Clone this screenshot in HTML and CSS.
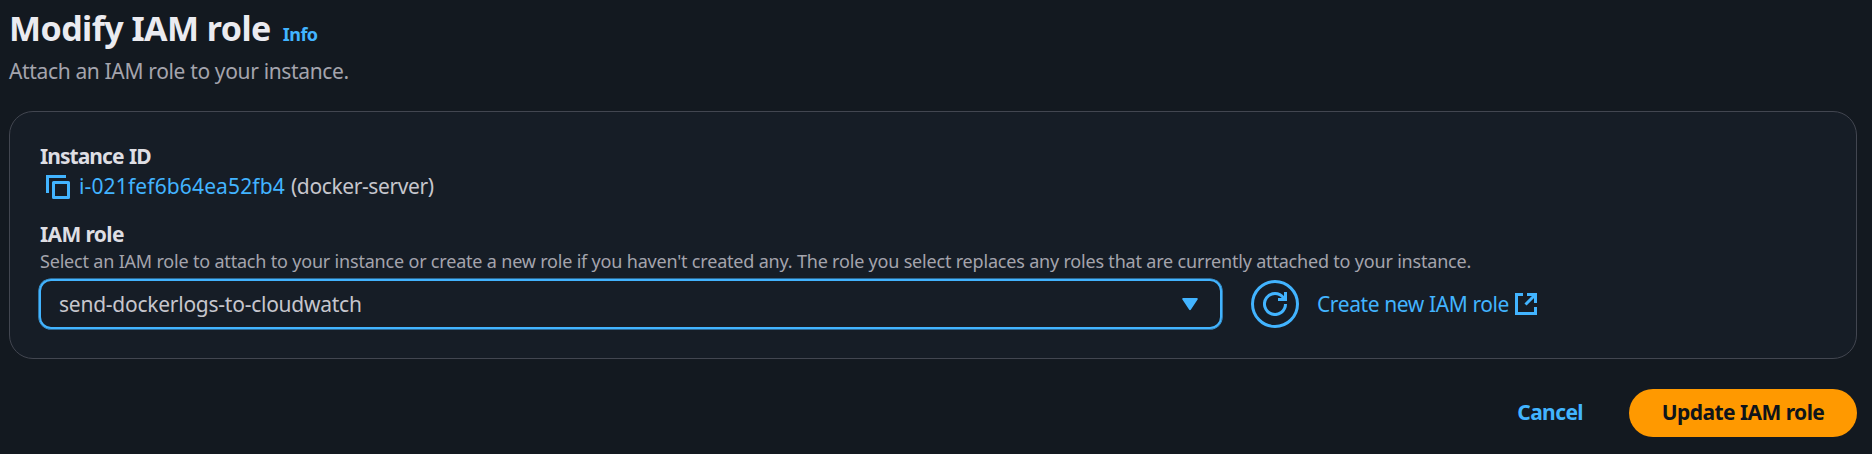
FILE: index.html
```html
<!DOCTYPE html>
<html lang="en">
<head>
<meta charset="utf-8">
<title>Modify IAM role</title>
<link rel="stylesheet" href="styles.css">
</head>
<body>
<main class="page">
  <header class="header">
    <div class="title-row">
      <h1 class="title">Modify IAM role</h1>
      <a class="info">Info</a>
    </div>
    <p class="subtitle">Attach an IAM role to your instance.</p>
  </header>
  <section class="card">
    <div class="label id-label">Instance ID</div>
    <div class="instance">
      <svg class="copy-icon" width="24" height="24" viewBox="0 0 24 24" fill="none" stroke="currentColor" stroke-width="3"><path d="M1.5 18V1.5H20"/><path d="M7.5 7.5h15v15h-15z" stroke-linejoin="round"/></svg>
      <a class="instance-id">i-021fef6b64ea52fb4</a>
      <span class="instance-name">(docker-server)</span>
    </div>
    <div class="label role-label">IAM role</div>
    <p class="description">Select an IAM role to attach to your instance or create a new role if you haven't created any. The role you select replaces any roles that are currently attached to your instance.</p>
    <div class="controls">
      <div class="select">
        <span class="select-value">send-dockerlogs-to-cloudwatch</span>
        <svg class="caret" width="16" height="13" viewBox="0 0 16 13" fill="currentColor"><path d="M1.2 0h13.6c.9 0 1.3.8.8 1.6L8.8 11.8c-.4.6-1.2.6-1.6 0L.4 1.6C-.1.8.3 0 1.2 0z"/></svg>
      </div>
      <button class="refresh" aria-label="Refresh">
        <svg width="24" height="24" viewBox="0 0 24 24" fill="none" stroke="currentColor" stroke-width="3"><path d="M22.5 12A10.5 10.5 0 1 1 20.4 5.7L22 7.5"/><path d="M22.5 0v7.5H15"/></svg>
      </button>
      <a class="create">Create new IAM role</a>
      <svg class="external-icon" width="22" height="22" viewBox="0 0 22 22" fill="none" stroke="currentColor" stroke-width="3"><path d="M8 1.5H1.5v19h19V14"/><path d="M12 1.5h8.5V10M20.5 1.5l-10 10"/></svg>
    </div>
  </section>
  <footer class="actions">
    <button class="cancel">Cancel</button>
    <button class="update">Update IAM role</button>
  </footer>
</main>
</body>
</html>
```

FILE: styles.css
```css
* { box-sizing: border-box; }
body { margin: 0; background: #131920; color: #c6c6cd; font: 21px/30px "Noto Sans", sans-serif; }
h1, p { margin: 0; }
.page { height: 454px; padding: 5px 15px 0 9px; overflow: hidden; }
.title-row { display: flex; align-items: baseline; height: 46px; gap: 12px; }
.title { font-size: 34px; line-height: 46px; letter-spacing: -0.57px; color: #ebebf0; white-space: nowrap; }
.info { font-size: 18px; font-weight: 700; letter-spacing: -0.5px; color: #42b4ff; }
.subtitle { margin-top: 5px; letter-spacing: -0.35px; color: #a4a4ad; }
.card { height: 248px; margin-top: 25px; padding: 29px 30px 0; border: 1px solid #424650; border-radius: 24px; background: #161d26; }
.label { font-weight: 700; color: #dedee3; }
.id-label { letter-spacing: -0.95px; word-spacing: 1px; }
.instance { display: flex; height: 30px; padding-left: 6px; }
.copy-icon { margin-top: 4px; color: #42b4ff; }
.instance-id { margin-left: 9px; letter-spacing: 0.14px; color: #42b4ff; }
.instance-name { margin-left: 6px; letter-spacing: -0.38px; }
.role-label { margin-top: 18px; letter-spacing: -0.62px; }
.description { font-size: 18px; line-height: 24px; letter-spacing: -0.192px; color: #a4a4ad; white-space: nowrap; }
.controls { display: flex; align-items: center; height: 52px; margin: 5px 0 0 -1px; color: #42b4ff; }
.select { display: flex; align-items: center; justify-content: space-between; width: 1183px; height: 50px; padding: 0 22px 0 18px; border: 2px solid #42b4ff; border-radius: 12px; box-shadow: 0 0 0 0.6px #42b4ff; }
.select-value { padding-bottom: 1px; letter-spacing: -0.25px; color: #c6c6cd; }
button { padding: 0; border: 0; background: none; font: inherit; font-weight: 700; }
.refresh { display: flex; align-items: center; justify-content: center; width: 48px; height: 48px; margin-left: 29px; border: 3px solid #42b4ff; border-radius: 50%; color: #42b4ff; }
.create { margin-left: 18px; padding-bottom: 1px; letter-spacing: -0.4px; }
.external-icon { margin-left: 6px; }
.actions { display: flex; justify-content: flex-end; align-items: center; height: 48px; margin-top: 30px; gap: 46px; }
.cancel { padding-bottom: 2px; letter-spacing: -0.6px; color: #42b4ff; }
.update { width: 228px; height: 48px; padding-bottom: 2px; border-radius: 24px; letter-spacing: -0.55px; background: #ff9900; color: #0f141a; }
```
